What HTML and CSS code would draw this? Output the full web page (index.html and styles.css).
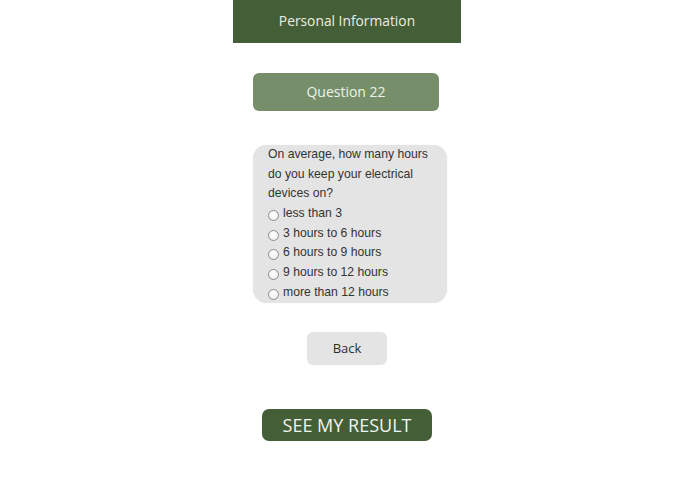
FILE: index.html
```html
<!DOCTYPE html>
<html>
<head>
<meta charset="utf-8">
<link rel="stylesheet" href="styles.css">
</head>
<body>
<div class="column">
  <header class="topbar">Personal Information</header>
  <div class="qlabel">Question 22</div>
  <div class="card">
    <p class="question">On average, how many hours do you keep your electrical devices on?</p>
    <label class="opt"><input type="radio" name="q22"><span>less than 3</span></label>
    <label class="opt"><input type="radio" name="q22"><span>3 hours to 6 hours</span></label>
    <label class="opt"><input type="radio" name="q22"><span>6 hours to 9 hours</span></label>
    <label class="opt"><input type="radio" name="q22"><span>9 hours to 12 hours</span></label>
    <label class="opt"><input type="radio" name="q22"><span>more than 12 hours</span></label>
  </div>
  <button class="back">Back</button>
  <button class="result">SEE MY RESULT</button>
</div>
</body>
</html>
```

FILE: styles.css
```css
html, body {
  margin: 0;
  padding: 0;
  background: #ffffff;
}
.column {
  width: 228px;
  margin-left: calc(50% - 114.5px);
  display: flex;
  flex-direction: column;
  font-family: "Open Sans", "Liberation Sans", sans-serif;
}
.topbar {
  height: 43px;
  background: #445e37;
  color: #e9efe4;
  font-size: 13.8px;
  display: flex;
  align-items: center;
  justify-content: center;
  box-sizing: border-box;
  padding-bottom: 3px;
}
.qlabel {
  margin: 30px 0 0 20px;
  width: 186px;
  height: 38px;
  border-radius: 6px;
  background: #778e6b;
  color: #eef2ea;
  font-size: 14px;
  display: flex;
  align-items: center;
  justify-content: center;
  box-sizing: border-box;
  padding-bottom: 2px;
}
.card {
  margin: 34px 0 0 20px;
  width: 194px;
  height: 158px;
  box-sizing: border-box;
  padding: 0 8px 0 15px;
  background: #e4e4e4;
  border-radius: 14px;
  box-shadow: 0 0 1px rgba(0,0,0,0.15);
  font-family: "Liberation Sans", Arial, sans-serif;
  font-size: 12.2px;
  line-height: 19.7px;
  color: #333333;
  display: flex;
  flex-direction: column;
}
.question {
  margin: 0;
}
.opt {
  display: flex;
  align-items: center;
  height: 19.7px;
}
.opt input {
  appearance: none;
  -webkit-appearance: none;
  margin: 3px 4px 0 0;
  width: 11px;
  height: 11px;
  border-radius: 50%;
  border: 1px solid #8c8c8c;
  background: radial-gradient(circle at 50% 40%, #ffffff 0%, #f4f4f4 60%, #dcdcdc 100%);
  box-sizing: border-box;
  flex: none;
}
.back {
  align-self: center;
  margin-top: 29px;
  width: 80px;
  height: 33px;
  border: none;
  border-radius: 6px;
  background: #e4e4e4;
  color: #2e2e2e;
  font-family: "Open Sans", "Liberation Sans", sans-serif;
  font-size: 13px;
  padding: 0 0 1px 0;
}
.result {
  align-self: center;
  margin-top: 44px;
  width: 170px;
  height: 32px;
  border: none;
  border-radius: 7px;
  background: #445e37;
  color: #f1f5ee;
  font-family: "Open Sans", "Liberation Sans", sans-serif;
  font-size: 18px;
  padding: 0;
}
```
